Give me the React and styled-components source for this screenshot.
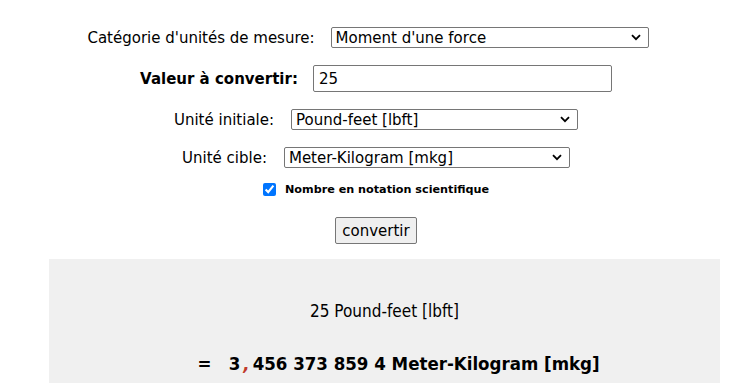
import React from "react";
import styled, { createGlobalStyle } from "styled-components";

const Global = createGlobalStyle`
  html, body { margin: 0; padding: 0; background: #fff; }
  body { font-family: "DejaVu Sans", Verdana, sans-serif; color: #000; }
`;

const Page = styled.div`
  display: flex;
  flex-direction: column;
  padding-top: 27px;
`;

const Form = styled.form`
  display: flex;
  flex-direction: column;
  align-items: center;
  padding-left: 10px;
`;

const Row = styled.div`
  display: flex;
  align-items: center;
  justify-content: center;
  height: ${(p) => p.$h}px;
  margin-bottom: ${(p) => p.$mb}px;
  gap: ${(p) => p.$gap ?? 16}px;
  padding-right: ${(p) => p.$pr ?? 0}px;
`;

const Label = styled.label`
  font-size: 15px;
  font-weight: ${(p) => (p.$bold ? 700 : 400)};
  white-space: nowrap;
`;

const SelectWrap = styled.div`
  position: relative;
  width: ${(p) => p.$w}px;
  height: 21px;
`;

const Select = styled.select`
  appearance: none;
  -webkit-appearance: none;
  width: 100%;
  height: 100%;
  box-sizing: border-box;
  border: 1px solid #767676;
  border-radius: 2px;
  background: #fff;
  font-family: "DejaVu Sans", Verdana, sans-serif;
  font-size: 15px;
  color: #000;
  padding: 0 20px 0 4px;
  margin: 0;
`;

const Chevron = styled.svg`
  position: absolute;
  right: 8px;
  top: 7px;
  pointer-events: none;
`;

const Input = styled.input`
  width: 299px;
  height: 27px;
  box-sizing: border-box;
  border: 1px solid #767676;
  border-radius: 2px;
  font-family: "DejaVu Sans", Verdana, sans-serif;
  font-size: 15px;
  padding: 0 5px;
  margin: 0;
  color: #000;
`;

const Check = styled.input`
  width: 13px;
  height: 13px;
  margin: 0;
  accent-color: #0075ff;
`;

const CheckLabel = styled.label`
  font-size: 11.2px;
  font-weight: 700;
  white-space: nowrap;
`;

const Button = styled.button`
  width: 82px;
  height: 27px;
  box-sizing: border-box;
  background: #efefef;
  border: 1px solid #767676;
  border-radius: 2px;
  font-family: "DejaVu Sans", Verdana, sans-serif;
  font-size: 15px;
  color: #000;
  padding: 0;
`;

const Result = styled.section`
  margin: 0 22px 0 49px;
  background: #f0f0f0;
  height: 140px;
  display: flex;
  flex-direction: column;
  align-items: center;
  padding-top: 41px;
  box-sizing: border-box;
  font-family: "DejaVu Sans Condensed", "DejaVu Sans", sans-serif;
  font-size: 17px;
`;

const Source = styled.div`
  height: 22px;
  line-height: 22px;
  margin-bottom: 30px;
`;

const Target = styled.div`
  font-weight: 700;
  font-size: 18.5px;
  height: 24px;
  line-height: 24px;
  display: flex;
  white-space: pre;
  padding-left: 28px;
`;

const Comma = styled.span`
  color: #c0392b;
  font-style: italic;
  margin: 0 3px 0 3px;
`;

const Arrow = () => (
  <Chevron width="10" height="7" viewBox="0 0 10 7">
    <path d="M1 1.2 L5 5.2 L9 1.2" fill="none" stroke="#000" strokeWidth="1.8" />
  </Chevron>
);

export default function App() {
  return (
    <>
      <Global />
      <Page>
        <Form onSubmit={(e) => e.preventDefault()}>
          <Row $h={21} $mb={17} $gap={16} $pr={16}>
            <Label>Catégorie d'unités de mesure:</Label>
            <SelectWrap $w={318}>
              <Select defaultValue="m">
                <option value="m">Moment d'une force</option>
              </Select>
              <Arrow />
            </SelectWrap>
          </Row>
          <Row $h={27} $mb={17} $gap={15}>
            <Label $bold>Valeur à convertir:</Label>
            <Input defaultValue="25" />
          </Row>
          <Row $h={21} $mb={17} $gap={17}>
            <Label>Unité initiale:</Label>
            <SelectWrap $w={287}>
              <Select defaultValue="lbft">
                <option value="lbft">Pound-feet [lbft]</option>
              </Select>
              <Arrow />
            </SelectWrap>
          </Row>
          <Row $h={21} $mb={15} $gap={17}>
            <Label>Unité cible:</Label>
            <SelectWrap $w={286}>
              <Select defaultValue="mkg">
                <option value="mkg">Meter-Kilogram [mkg]</option>
              </Select>
              <Arrow />
            </SelectWrap>
          </Row>
          <Row $h={13} $mb={21} $gap={9}>
            <Check type="checkbox" defaultChecked id="sci" />
            <CheckLabel htmlFor="sci">Nombre en notation scientifique</CheckLabel>
          </Row>
          <Row $h={27} $mb={15}>
            <Button type="submit">convertir</Button>
          </Row>
        </Form>
        <Result>
          <Source>25 Pound-feet [lbft]</Source>
          <Target>
            {"=   3"}
            <Comma>,</Comma>
            {"456 373 859 4 Meter-Kilogram [mkg]"}
          </Target>
        </Result>
      </Page>
    </>
  );
}
